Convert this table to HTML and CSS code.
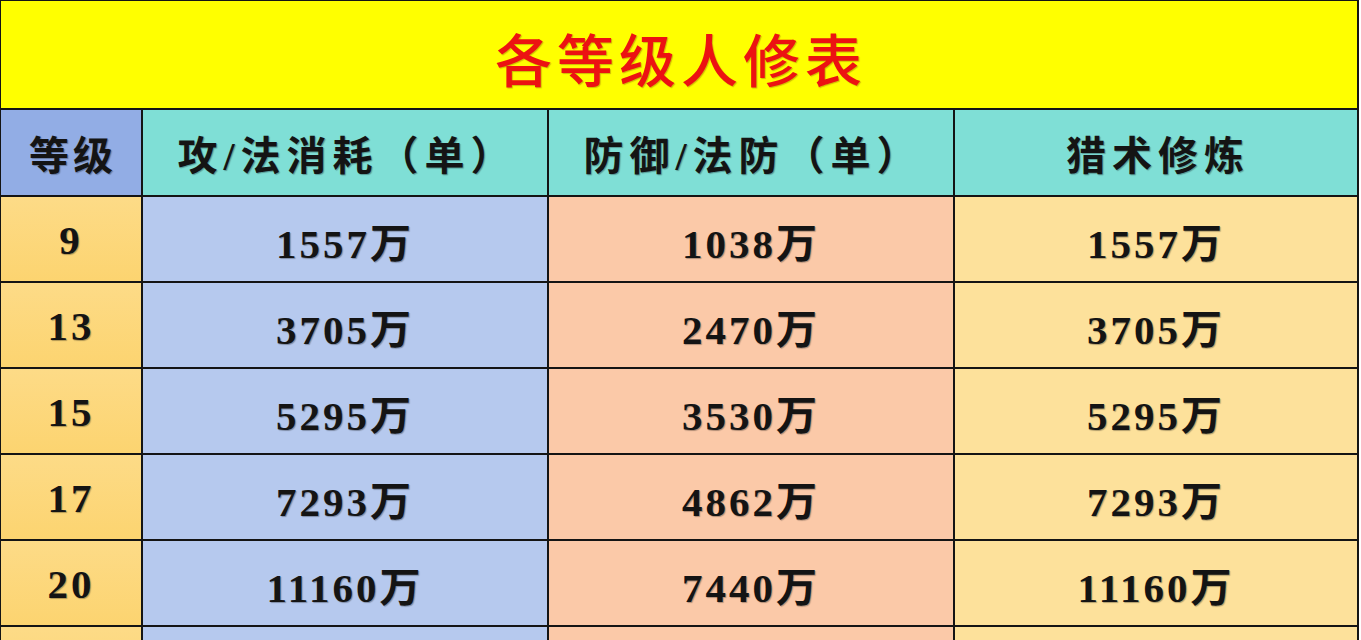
FILE: index.html
```html
<!DOCTYPE html>
<html lang="zh-CN">
<head>
<meta charset="utf-8">
<title>各等级人修表</title>
<link rel="stylesheet" href="styles.css">
</head>
<body>
<div class="sheet">
  <div class="title">各等级人修表</div>

  <div class="cell head lvl-head">等级</div>
  <div class="cell head">攻/法消耗（单）</div>
  <div class="cell head">防御/法防（单）</div>
  <div class="cell head">猎术修炼</div>

  <div class="cell lvl">9</div>
  <div class="cell atk">1557万</div>
  <div class="cell def">1038万</div>
  <div class="cell hunt">1557万</div>

  <div class="cell lvl">13</div>
  <div class="cell atk">3705万</div>
  <div class="cell def">2470万</div>
  <div class="cell hunt">3705万</div>

  <div class="cell lvl">15</div>
  <div class="cell atk">5295万</div>
  <div class="cell def">3530万</div>
  <div class="cell hunt">5295万</div>

  <div class="cell lvl">17</div>
  <div class="cell atk">7293万</div>
  <div class="cell def">4862万</div>
  <div class="cell hunt">7293万</div>

  <div class="cell lvl">20</div>
  <div class="cell atk">11160万</div>
  <div class="cell def">7440万</div>
  <div class="cell hunt">11160万</div>

  <div class="cell lvl"></div>
  <div class="cell atk"></div>
  <div class="cell def"></div>
  <div class="cell hunt"></div>
</div>
</body>
</html>
```

FILE: styles.css
```css
html, body {
  margin: 0;
  padding: 0;
  background: #ffffff;
}

.sheet {
  width: 1356px;
  display: grid;
  grid-template-columns: 140px 404px 404px 402px;
  grid-template-rows: 107px 85px repeat(6, 84px);
  gap: 2px;
  padding: 1px 2px 2px 1px;
  background: #141414;
  font-family: "Liberation Serif", "Noto Sans CJK SC", serif;
  font-weight: 700;
  color: #141414;
}

.title {
  grid-column: 1 / -1;
  background: #ffff00;
  color: #ec1212;
  font-family: "Noto Sans CJK SC", sans-serif;
  font-weight: 500;
  font-size: 57px;
  letter-spacing: 5px;
  display: flex;
  align-items: center;
  justify-content: center;
  padding-left: 4px;
  padding-top: 4px;
  text-shadow: 1px 1px 1px rgba(120, 60, 0, 0.35);
}

.cell {
  display: flex;
  align-items: center;
  justify-content: center;
  text-shadow: 1px 1px 1px rgba(0, 0, 0, 0.3);
}

.head {
  background: #7fdfd6;
  font-size: 40px;
  letter-spacing: 6px;
  padding-left: 4px;
}

.lvl-head {
  background: #92ade5;
  letter-spacing: 4px;
}

.lvl, .atk, .def, .hunt {
  font-size: 41px;
  letter-spacing: 3px;
  padding-top: 2px;
}

.lvl {
  background: linear-gradient(180deg, #fddb87 0%, #fcd470 100%);
}

.atk {
  background: #b6c9ee;
}

.def {
  background: #fbc9a8;
}

.hunt {
  background: #fde19b;
}
```
